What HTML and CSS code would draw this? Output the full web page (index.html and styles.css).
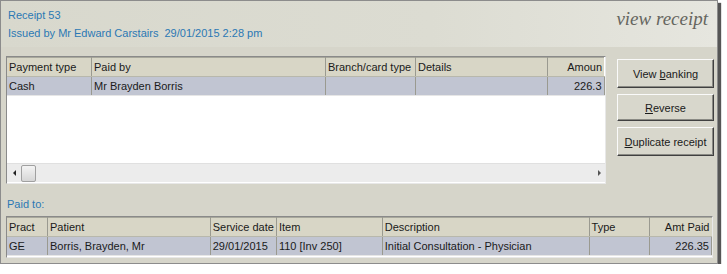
FILE: index.html
```html
<!DOCTYPE html>
<html lang="en">
<head>
    <meta charset="UTF-8">
    <title>View receipt</title>
    <link rel="stylesheet" href="styles.css">
</head>
<body>
    <div class="window">
        <div class="header">
            <div class="header-text">
                <div class="title">Receipt 53</div>
                <div class="title">Issued by Mr Edward Carstairs&nbsp; 29/01/2015 2:28 pm</div>
            </div>
            <div class="caption">view receipt</div>
        </div>

        <div class="main">
            <div class="grid-box payments">
                <div class="grid-area">
                    <table class="grid">
                        <tr>
                            <th class="c-ptype">Payment type</th>
                            <th class="c-paidby">Paid by</th>
                            <th class="c-branch">Branch/card type</th>
                            <th class="c-details">Details</th>
                            <th class="c-amount num">Amoun</th>
                        </tr>
                        <tr class="selected">
                            <td>Cash</td>
                            <td>Mr Brayden Borris</td>
                            <td></td>
                            <td></td>
                            <td class="num">226.3</td>
                        </tr>
                    </table>
                </div>
                <div class="hscroll">
                    <span class="arrow-left"></span>
                    <span class="thumb"></span>
                    <span class="spacer"></span>
                    <span class="arrow-right"></span>
                </div>
            </div>
            <div class="buttons">
                <button class="btn">View <u>b</u>anking</button>
                <button class="btn"><u>R</u>everse</button>
                <button class="btn"><u>D</u>uplicate receipt</button>
            </div>
        </div>

        <div class="section-label">Paid to:</div>

        <div class="grid-box items">
            <table class="grid">
                <tr>
                    <th class="c-pract">Pract</th>
                    <th class="c-patient">Patient</th>
                    <th class="c-sdate">Service date</th>
                    <th class="c-item">Item</th>
                    <th class="c-desc">Description</th>
                    <th class="c-type">Type</th>
                    <th class="c-amt num">Amt Paid</th>
                </tr>
                <tr class="selected">
                    <td>GE</td>
                    <td>Borris, Brayden, Mr</td>
                    <td>29/01/2015</td>
                    <td>110 [Inv 250]</td>
                    <td>Initial Consultation - Physician</td>
                    <td></td>
                    <td class="num">226.35</td>
                </tr>
            </table>
        </div>
    </div>
</body>
</html>
```

FILE: styles.css
```css
body {
    margin: 0;
    background-color: white;
    font-family: "Liberation Sans", Arial, sans-serif;
    font-size: 11px;
    color: #1a1a1a;
}
.window {
    width: 718px;
    height: 264px;
    box-sizing: border-box;
    border: 1px solid #8c8c8c;
    background-color: #d6d5ca;
    box-shadow: 3px 3px 1px #555;
}
.header {
    display: flex;
    justify-content: space-between;
    height: 46px;
    padding: 5px 7px 0 7px;
    box-sizing: border-box;
    background: linear-gradient(to right, #d8d8cd 0%, #dcdcd2 60%, #e6e6df 100%);
}
.title {
    color: #2b78b4;
    font-size: 11px;
    line-height: 18px;
}
.caption {
    font-family: "Liberation Serif", "DejaVu Serif", serif;
    font-style: italic;
    font-size: 19px;
    color: #66665f;
    padding-top: 2px;
    padding-right: 2px;
}

.main {
    display: flex;
    padding: 9px 0 0 5px;
}
.grid-box {
    background-color: white;
    border: 1px solid #8a8a8a;
    border-right-color: #e8e8e8;
    border-bottom-color: #e8e8e8;
}
.payments {
    width: 600px;
    height: 128px;
    display: flex;
    flex-direction: column;
    box-sizing: border-box;
}
.grid-area {
    flex: 1;
    overflow: hidden;
}
table.grid {
    border-collapse: collapse;
    table-layout: fixed;
}
.grid th, .grid td {
    height: 18px;
    padding: 0 2px;
    text-align: left;
    font-weight: normal;
    white-space: nowrap;
    overflow: hidden;
    border-right: 1px solid #9a9a90;
}
.grid th {
    background-color: #d8d6c6;
    border-top: 1px solid #a8a89c;
    border-bottom: 1px solid #b8b8ac;
}
.grid tr.selected td {
    background-color: #c1c5d2;
    border-bottom: 1px solid #e6e6e6;
}
.grid .num {
    text-align: right;
}

.c-ptype { width: 80px; }
.c-paidby { width: 229px; }
.c-branch { width: 85px; }
.c-details { width: 127px; }
.c-amount { width: 52px; border-right: none !important; }

.hscroll {
    display: flex;
    align-items: center;
    height: 18px;
    background-color: #ececec;
    border-top: 1px solid #e0e0e0;
    margin-bottom: 1px;
    padding: 0 4px 0 6px;
}
.arrow-left {
    width: 0;
    height: 0;
    border-top: 3px solid transparent;
    border-bottom: 3px solid transparent;
    border-right: 3px solid #222;
}
.arrow-right {
    width: 0;
    height: 0;
    border-top: 3px solid transparent;
    border-bottom: 3px solid transparent;
    border-left: 3px solid #555;
}
.thumb {
    width: 13px;
    height: 15px;
    margin-left: 5px;
    border: 1px solid #a0a0a0;
    border-radius: 2px;
    background: linear-gradient(to bottom, #f4f4f4, #d6d6d6);
}
.spacer {
    flex: 1;
}

.buttons {
    display: flex;
    flex-direction: column;
    gap: 6px;
    margin-left: 11px;
    padding-top: 3px;
}
.btn {
    width: 97px;
    height: 29px;
    padding: 0;
    font-family: "Liberation Sans", Arial, sans-serif;
    font-size: 11px;
    color: #1a1a1a;
    background-color: #d8d7cc;
    border: 1px solid;
    border-color: #fafafa #404040 #404040 #fafafa;
    box-shadow: inset -1px -1px 0 #8a8a84;
}
.btn:nth-child(2) {
    height: 27px;
}

.section-label {
    color: #2b78b4;
    font-size: 11px;
    padding: 14px 0 0 6px;
    height: 21px;
    box-sizing: border-box;
}
.items {
    margin: 11px 0 0 5px;
    width: 707px;
    height: 42px;
    box-sizing: border-box;
    overflow: hidden;
}
.c-pract { width: 36px; }
.c-patient { width: 158px; }
.c-sdate { width: 61px; }
.c-item { width: 101px; }
.c-desc { width: 202px; }
.c-type { width: 55px; }
.c-amt { width: 58px; border-right: none !important; }
```
